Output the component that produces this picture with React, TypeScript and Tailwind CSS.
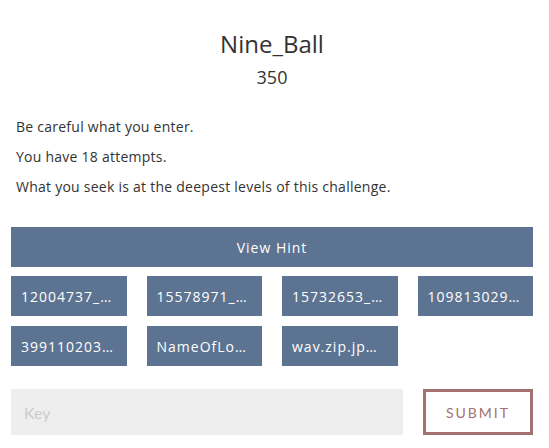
const files = [
  '12004737_1015305905241823_jpg',
  '15578971_1234567890123_png',
  '15732653_1098765432101_jpg',
  '109813029_abcdef.jpg',
  '399110203_file.png',
  'NameOfLostFiles.txt',
  'wav.zip.jpWAV.zip',
];

const App = () => {
  return (
    <div className="w-[549px] h-[448px] bg-white font-['Open_Sans',sans-serif] text-[#333]">
      <div className="pl-[11px] pr-[16px] pt-[29px]">
        <h2 className="text-center text-[24px] leading-[29px]">Nine_Ball</h2>
        <h4 className="mt-[8px] text-center text-[18px] leading-[22px]">350</h4>

        <div className="mt-[24px] px-[5px] text-[14px] leading-[30px] tracking-[0.25px]">
          <p>Be careful what you enter.</p>
          <p>You have 18 attempts.</p>
          <p>What you seek is at the deepest levels of this challenge.</p>
        </div>

        <button className="mt-[25px] h-[40px] w-full bg-[#5c7391] text-[14px] tracking-[1px] text-white">
          View Hint
        </button>

        <div className="mt-[9px] grid grid-cols-4 gap-x-[20px] gap-y-[10px]">
          {files.map((f) => (
            <button
              key={f}
              className="h-[40px] bg-[#5c7391] px-[10px] text-left text-[14px] tracking-[1px] text-white truncate"
            >
              {f}
            </button>
          ))}
        </div>

        <div className="mt-[23px] flex gap-[20px]">
          <input
            className="h-[46px] flex-1 bg-[#eeeeee] px-[13px] text-[16px] font-['Lato',sans-serif] outline-none placeholder:text-[#cccccc]"
            placeholder="Key"
          />
          <button className="h-[46px] w-[110px] border-[3px] border-[#a27171] text-[14px] tracking-[2px] text-[#a27171] font-['Lato',sans-serif]">
            SUBMIT
          </button>
        </div>
      </div>
    </div>
  );
};

export default App;
